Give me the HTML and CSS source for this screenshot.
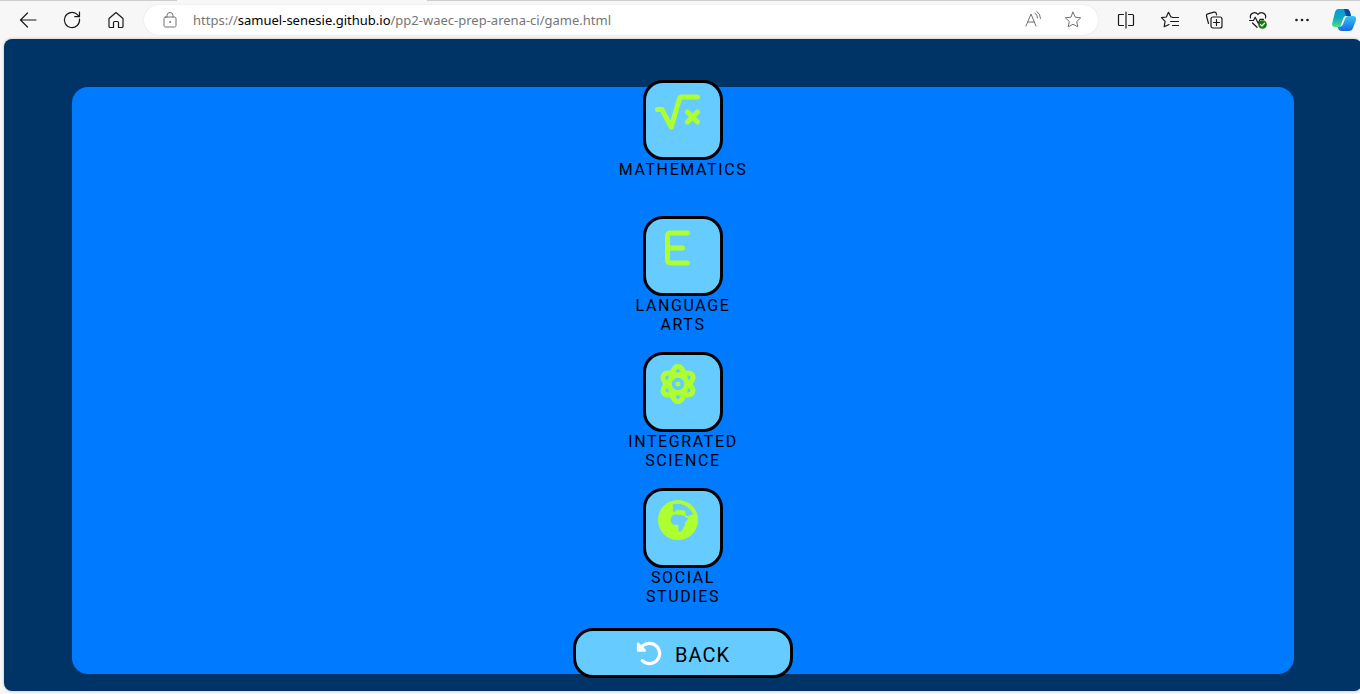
FILE: index.html
```
<!DOCTYPE html>
<html lang="en">
<head>
<meta charset="utf-8">
<title>WAEC Prep Arena</title>
<link rel="stylesheet" href="styles.css">
</head>
<body>
<div class="tab-strip"><span class="active-tab"></span></div>
<header class="toolbar">
  <nav class="nav-buttons">
    <button class="tool" aria-label="Back"><svg viewBox="0 0 20 20"><path d="M18 10H2.5M9.500 3L2.500 10l7 7"/></svg></button>
    <button class="tool" aria-label="Refresh"><svg viewBox="0 0 20 20"><path d="M17.500 9a7.600 7.600 0 1 1-2.400-4.600L17.300 6.500M17.500 2v4.700h-4.700"/></svg></button>
    <button class="tool" aria-label="Home"><svg viewBox="0 0 20 20"><path d="M3 8.500L10 2.500l7 6v8a1 1 0 0 1-1 1h-3.500v-5a1 1 0 0 0-1-1h-3a1 1 0 0 0-1 1v5H4a1 1 0 0 1-1-1z"/></svg></button>
  </nav>
  <div class="address">
    <button class="tool muted" aria-label="Site information"><svg viewBox="0 0 20 20"><rect x="4" y="7" width="12" height="10" rx="1.500"/><path d="M7 7V5.500a3 3 0 0 1 6 0V7"/><circle cx="10" cy="12" r=".5"/></svg></button>
    <div class="url" role="textbox" contenteditable="true" spellcheck="false" aria-label="Address">https://<span class="host">samuel-senesie.github.io</span>/pp2-waec-prep-arena-ci/game.html</div>
    <button class="tool muted" aria-label="Read aloud"><svg viewBox="0 0 20 20"><path d="M3 16L8 4l5 12M4.700 12h6.600M12 3q2.500 2 2.500 5M14 1.500q3.500 2.500 3.500 7"/></svg></button>
    <button class="tool muted" aria-label="Add to favorites"><svg viewBox="0 0 20 20"><path d="M10 2.200l2.300 5 5.400.600-4 3.700 1.100 5.400-4.800-2.700-4.800 2.700 1.100-5.400-4-3.700 5.400-.600z"/></svg></button>
  </div>
  <nav class="actions">
    <button class="tool" aria-label="Split screen"><svg viewBox="0 0 20 20"><path d="M10 2v16M7.500 4.500h-4a1 1 0 0 0-1 1v9a1 1 0 0 0 1 1h4M12.500 4.500h4a1 1 0 0 1 1 1v9a1 1 0 0 1-1 1h-4"/></svg></button>
    <button class="tool" aria-label="Favorites"><svg viewBox="0 0 20 20"><path d="M12 7L10.800 6.800 8.500 2.300 6.300 7 1.500 7.700l3.600 3.700-.9 5.300L9 14.500M12.500 7.500h6M10.500 11.500h8M12.500 15.500h6"/></svg></button>
    <button class="tool" aria-label="Collections"><svg viewBox="0 0 20 20"><rect x="7" y="7" width="11" height="11" rx="2"/><path d="M12.500 9.500v6M9.500 12.500h6M4.500 13.500L2.500 6a1.800 1.800 0 0 1 1.300-2.200l6.200-1.700a1.800 1.800 0 0 1 2.200 1.300l.4 1.400"/></svg></button>
    <button class="tool" aria-label="Browser essentials"><svg viewBox="0 0 20 20"><path d="M2.500 8a4.200 4.200 0 0 1 7.500-3.500A4.200 4.200 0 0 1 17.500 8M1.500 10.500h4l1.700-3.200 3 6 2-4h3.300M4.500 13l4.500 4.300"/><circle class="badge" cx="14.500" cy="14.500" r="4.300"/><path class="check" d="M12.500 14.600l1.500 1.400 2.600-2.900"/></svg></button>
    <button class="tool" aria-label="Settings and more"><svg viewBox="0 0 20 20" class="dots"><circle cx="4.500" cy="10" r="1.300"/><circle cx="10" cy="10" r="1.300"/><circle cx="15.500" cy="10" r="1.300"/></svg></button>
    <button class="tool copilot" aria-label="Copilot"><svg viewBox="0 0 24 24">
      <defs>
        <linearGradient id="sky" x1="0" y1="0" x2="0" y2="1"><stop offset="0" stop-color="#079bd8"/><stop offset=".5" stop-color="#10a8bf"/><stop offset="1" stop-color="#4ee07c"/></linearGradient>
        <linearGradient id="sea" x1="0" y1="0" x2="0" y2="1"><stop offset="0" stop-color="#35c6ef"/><stop offset="1" stop-color="#1769e6"/></linearGradient>
      </defs>
      <path fill="url(#sky)" d="M6 1h9q2 0 3 3l1 4h-3q-3 0-4 3l-2 6q-1 2-3 2H3q-4 0-2.500-5L3 4q1-3 3-3z"/>
      <path fill="#0647a6" d="M12 1h3q2 0 3 3l1 4h-5z"/>
      <path fill="url(#sea)" d="M16 8h5q4 0 2.700 5L21 20q-1 3-4 3H9q-2 0-3-3l-.500-1H7q2 0 3-2l3-7q1-2 3-2z"/>
      <path fill="#f7f7f7" d="M13 8h3q-2 0-3 3l-2 5q-.700 2-2.500 2.200L11 11q.700-2 2-3z"/>
    </svg></button>
  </nav>
</header>
<main class="page">
  <section class="panel">
    <ul class="subjects">
      <li class="subject">
        <button class="tile" aria-labelledby="math"><svg class="outline" viewBox="0 0 576 512"><path d="M32 224h56l120 224L313 87q7-23 31-23h200M416 256l128 128M544 256L416 384"/></svg></button>
        <span class="label" id="math">MATHEMATICS</span>
      </li>
      <li class="subject">
        <button class="tile" aria-labelledby="language"><svg class="outline" viewBox="0 0 320 512"><path d="M288 64H64a32 32 0 0 0-32 32v320a32 32 0 0 0 32 32h224M32 256h192"/></svg></button>
        <span class="label" id="language">LANGUAGE ARTS</span>
      </li>
      <li class="subject">
        <button class="tile" aria-labelledby="science"><svg viewBox="0 0 512 512"><path d="M256 398.800c-11.800 5.100-23.400 9.700-34.900 13.500c16.700 33.800 31 35.700 34.900 35.700s18.100-1.900 34.900-35.700c-11.400-3.900-23.100-8.400-34.900-13.500zM446 256c33 45.200 44.300 90.900 23.600 128c-20.200 36.300-62.500 49.300-115.200 43.200c-22 52.100-55.600 84.800-98.400 84.800s-76.400-32.700-98.400-84.800c-52.700 6.100-95-6.800-115.200-43.200C21.700 346.900 33 301.200 66 256c-33-45.200-44.300-90.900-23.600-128c20.200-36.300 62.500-49.300 115.200-43.200C179.600 32.700 213.200 0 256 0s76.400 32.700 98.400 84.800c52.700-6.100 95 6.800 115.200 43.200c20.700 37.100 9.400 82.800-23.600 128zm-65.800 67.400c-1.700 14.200-3.900 28-6.700 41.200c31.800 1.400 38.600-8.700 40.200-11.700c2.300-4.200 7-17.900-11.900-48.100c-6.800 6.300-14 12.500-21.600 18.600zm-6.700-175.900c2.800 13.100 5 26.900 6.700 41.200c7.600 6.100 14.800 12.300 21.600 18.600c18.900-30.200 14.200-44 11.900-48.100c-1.600-2.900-8.400-13-40.200-11.700zM290.900 99.700C274.100 65.900 259.900 64 256 64s-18.100 1.900-34.900 35.700c11.400 3.900 23.100 8.400 34.900 13.500c11.800-5.100 23.400-9.700 34.900-13.500zm-159 88.900c1.700-14.300 3.900-28 6.700-41.200c-31.800-1.400-38.600 8.700-40.200 11.700c-2.300 4.200-7 17.900 11.900 48.100c6.800-6.300 14-12.500 21.600-18.600zM110.200 304.800C91.400 335 96 348.700 98.300 352.900c1.600 2.900 8.400 13 40.200 11.700c-2.800-13.100-5-26.900-6.700-41.200c-7.600-6.100-14.800-12.300-21.600-18.600zM336 256a80 80 0 1 0-160 0 80 80 0 1 0 160 0zm-80-32a32 32 0 1 1 0 64 32 32 0 1 1 0-64z"/></svg></button>
        <span class="label" id="science">INTEGRATED SCIENCE</span>
      </li>
      <li class="subject">
        <button class="tile" aria-labelledby="social"><svg viewBox="0 0 512 512"><circle cx="256" cy="256" r="256"/><path class="land" d="M186 56Q256 38 340 68Q425 115 451 186L420 189L405 198L385 206L362 198L346 182L356 160L340 130L318 138L300 124L272 130L256 122L240 128L226 144Q208 158 196 146L192 100zM166 220L200 188L240 184L262 192L290 190L304 196L336 200L352 222L384 230L376 256L345 288L342 330L326 346L318 375L296 400Q274 412 262 394V326L250 316H198L164 286z"/></svg></button>
        <span class="label" id="social">SOCIAL STUDIES</span>
      </li>
    </ul>
    <button class="back"><svg viewBox="0 0 512 512"><path d="M48.500 224H40c-13.300 0-24-10.700-24-24V72c0-9.700 5.800-18.500 14.800-22.200s19.300-1.700 26.200 5.200L98.600 96.600c87.600-86.500 228.700-86.200 315.800 1c87.500 87.500 87.500 229.300 0 316.800s-229.300 87.500-316.800 0c-12.500-12.500-12.500-32.800 0-45.300s32.800-12.500 45.300 0c62.500 62.500 163.800 62.500 226.300 0s62.500-163.800 0-226.300c-62.200-62.200-162.700-62.500-225.300-1L185 183c6.900 6.900 8.900 17.200 5.200 26.200s-12.500 14.800-22.200 14.800H48.500z"/></svg><span>BACK</span></button>
  </section>
</main>
</body>
</html>
```
FILE: styles.css
```
* {
  box-sizing: border-box;
}

body {
  margin: 0;
  height: 100vh;
  display: flex;
  flex-direction: column;
  background: #f7f7f7;
  font-family: Roboto, "Liberation Sans", sans-serif;
  overflow: hidden;
}

button {
  padding: 0;
  border: 0;
  background: none;
  font: inherit;
  cursor: pointer;
}

.tab-strip {
  height: 1px;
  background: #cdcdcd;
  padding-left: 13%;
}

.active-tab {
  display: block;
  width: 250px;
  height: 1px;
  background: #f7f7f7;
}

.toolbar {
  height: 38px;
  display: flex;
  align-items: center;
  padding: 0 4px 0 18px;
}

.nav-buttons,
.actions {
  display: flex;
  align-items: center;
  gap: 24px;
}

.tool {
  width: 20px;
  height: 20px;
  flex: none;
}

.tool svg {
  display: block;
  width: 100%;
  height: 100%;
  fill: none;
  stroke: #1b1b1b;
  stroke-width: 1.2;
  stroke-linecap: round;
  stroke-linejoin: round;
}

.muted svg {
  stroke: #707070;
  stroke-width: 1;
}

.tool .dots {
  fill: #1b1b1b;
  stroke: none;
}

.tool .badge {
  fill: #107c10;
  stroke: none;
}

.tool .check {
  stroke: #ffffff;
}

.copilot {
  width: 24px;
  height: 24px;
  margin-left: -4px;
}

.copilot svg {
  stroke: none;
}

.address {
  flex: 1;
  height: 30px;
  margin: 0 18px;
  padding: 0 15px 0 16px;
  display: flex;
  align-items: center;
  border-radius: 15px;
  background: #ffffff;
  box-shadow: 0 0 2px #e0e0e0;
}

.url {
  flex: 1;
  margin-left: 13px;
  font-family: "Noto Sans", "Open Sans", sans-serif;
  font-size: 13px;
  line-height: 20px;
  white-space: nowrap;
  color: #767676;
  outline: none;
}

.url ~ .tool + .tool {
  margin-left: 20px;
}

.host {
  color: #000000;
}

.page {
  flex: 1;
  min-height: 0;
  margin: 0 -2px 3px 4px;
  padding: 0 5%;
  display: flex;
  align-items: flex-end;
  border-radius: 8px;
  background: #003366;
  box-shadow: 0 0 3px #b0b0b0;
}

.panel {
  flex: 1;
  height: 90%;
  margin-bottom: 17px;
  display: flex;
  flex-direction: column;
  align-items: center;
  justify-content: center;
  border-radius: 16px;
  background: #007bff;
}

.subjects {
  list-style: none;
  margin: 0;
  padding: 0;
}

.subject {
  width: 128px;
  height: 136px;
  display: flex;
  flex-direction: column;
  align-items: center;
}

.tile {
  width: 80px;
  height: 80px;
  flex: none;
  display: flex;
  justify-content: center;
  align-items: flex-start;
  padding: 9px 11px 0 0;
  border: 3px solid #000000;
  border-radius: 20px;
  background: #66ccff;
}

.tile svg {
  height: 40px;
  flex: none;
  fill: #adff2f;
}

.tile .outline {
  fill: none;
  stroke: #adff2f;
  stroke-width: 64;
  stroke-linecap: round;
  stroke-linejoin: round;
}

.tile .land {
  fill: #66ccff;
}

.label {
  width: min-content;
  font-size: 16px;
  line-height: 19px;
  letter-spacing: 0.1em;
  text-align: center;
  color: #000000;
}

.back {
  width: 220px;
  height: 50px;
  flex: none;
  margin: 4px 0 3px;
  display: flex;
  align-items: center;
  justify-content: center;
  gap: 12px;
  border: 3px solid #000000;
  border-radius: 20px;
  background: #66ccff;
  font-size: 20px;
  line-height: 24px;
  letter-spacing: 1px;
  color: #000000;
}

.back span {
  padding-top: 4px;
}

.back svg {
  width: 27px;
  height: 27px;
  fill: #ffffff;
}
```
